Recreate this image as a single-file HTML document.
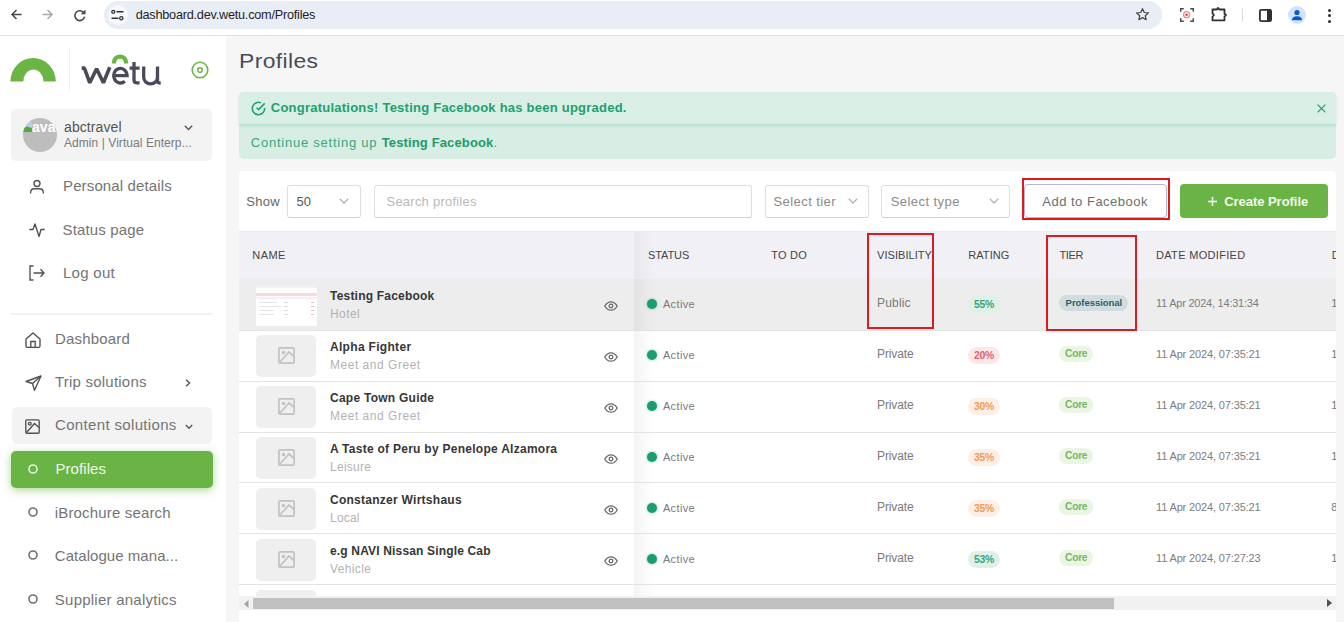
<!DOCTYPE html>
<html><head><meta charset="utf-8"><title>Profiles</title>
<style>
html,body{margin:0;padding:0;width:1344px;height:622px;overflow:hidden;background:#fff;}
body{position:relative;font-family:"Liberation Sans",sans-serif;}
.t{position:absolute;white-space:pre;}
svg{overflow:visible}
</style></head><body>
<div style="position:absolute;left:0px;top:0px;width:1344px;height:35px;background:#fff"></div>
<div style="position:absolute;left:0px;top:35px;width:1344px;height:1px;background:#e3e3e3"></div>
<svg style="position:absolute;left:11px;top:9.3px;" width="11" height="11" viewBox="0 0 11 11" fill="none"><path d="M10.5 5.5H1M5.5 1L1 5.5 5.5 10" stroke="#474747" stroke-width="1.5"/></svg>
<svg style="position:absolute;left:42px;top:9.3px;" width="11" height="11" viewBox="0 0 11 11" fill="none"><path d="M0.5 5.5H10M5.5 1L10 5.5 5.5 10" stroke="#a8a8a8" stroke-width="1.5"/></svg>
<svg style="position:absolute;left:74px;top:8.5px;" width="12" height="12" viewBox="0 0 12 12" fill="none"><path d="M10.1 4.3A4.9 4.9 0 1 0 10.6 7.6" stroke="#474747" stroke-width="1.6"/><path d="M11.5 0.5V5.3H6.7Z" fill="#474747"/></svg>
<div style="position:absolute;left:104px;top:1px;width:1058px;height:28px;background:#e9edf6;border-radius:14px"></div>
<div style="position:absolute;left:108px;top:5px;width:20px;height:20px;background:#f7f8fc;border-radius:50%"></div>
<svg style="position:absolute;left:111px;top:10px;" width="13" height="10" viewBox="0 0 13 10" fill="none"><circle cx="2.3" cy="1.8" r="1.5" stroke="#303030" stroke-width="1.3"/><path d="M5.5 1.8H12.5M0.5 8.2H7.5" stroke="#303030" stroke-width="1.4"/><circle cx="10.3" cy="8.2" r="1.6" stroke="#303030" stroke-width="1.3"/></svg>
<div class="t" style="left:135.7px;top:8.85px;font-size:12.7px;line-height:12.7px;font-weight:400;color:#1f1f1f;letter-spacing:-0.231px;">dashboard.dev.wetu.com/Profiles</div>
<svg style="position:absolute;left:1135px;top:7px;" width="15" height="15" viewBox="0 0 24 24" fill="none"><path d="M12 2.8l2.8 6 6.5.7-4.9 4.4 1.4 6.4L12 17l-5.8 3.3 1.4-6.4L2.7 9.5l6.5-.7z" stroke="#474747" stroke-width="2" stroke-linejoin="round"/></svg>
<svg style="position:absolute;left:1180px;top:8px;" width="14" height="14" viewBox="0 0 14 14" fill="none"><path d="M0.7 3.8V0.7H3.8M10.2 0.7H13.3V3.8M13.3 10.2V13.3H10.2M3.8 13.3H0.7V10.2" stroke="#4a4a4a" stroke-width="1.5"/><circle cx="6.6" cy="6.7" r="3" stroke="#f28b8b" stroke-width="1.3"/><circle cx="6.6" cy="6.7" r="1.3" fill="#e53935"/></svg>
<svg style="position:absolute;left:1211px;top:7px;" width="16" height="15" viewBox="0 0 16 15" fill="none"><path d="M1.5 2.5H5.9L7.1 0.9 8.3 2.5H13.5V6.8L15 8 13.5 9.2V13.3H1.5V9.6L3 8 1.5 6.4Z" stroke="#303030" stroke-width="1.8" stroke-linejoin="round"/></svg>
<div style="position:absolute;left:1242px;top:8px;width:1px;height:13px;background:#dcdcdc"></div>
<svg style="position:absolute;left:1259px;top:8.5px;" width="13" height="13" viewBox="0 0 13 13" fill="none"><rect x="0.9" y="0.9" width="11.2" height="11.2" rx="1.3" stroke="#303030" stroke-width="1.8"/><rect x="8" y="1" width="4" height="11" fill="#303030"/></svg>
<div style="position:absolute;left:1288px;top:6px;width:18px;height:18px;background:#d3e3fd;border-radius:50%"></div>
<svg style="position:absolute;left:1291px;top:9px;" width="12" height="12" viewBox="0 0 12 12" fill="none"><circle cx="6" cy="3.5" r="2.6" fill="#0b57d0"/><path d="M1 11.2C1 8.4 3.3 7.3 6 7.3s5 1.1 5 3.9z" fill="#0b57d0"/></svg>
<div style="position:absolute;left:1327.5px;top:8.5px;width:3px;height:3px;border-radius:50%;background:#303030"></div>
<div style="position:absolute;left:1327.5px;top:14px;width:3px;height:3px;border-radius:50%;background:#303030"></div>
<div style="position:absolute;left:1327.5px;top:19.5px;width:3px;height:3px;border-radius:50%;background:#303030"></div>
<div style="position:absolute;left:0px;top:36px;width:226px;height:586px;background:#fff"></div>
<svg style="position:absolute;left:0px;top:40px;" width="70" height="50" viewBox="0 40 70 50" fill="none"><path d="M10.4 81.6A22.7 23.6 0 0 1 55.8 81.6H43.5A10.1 12 0 0 0 23.3 81.6Z" fill="#6bb545"/></svg>
<div style="position:absolute;left:69px;top:48px;width:1px;height:43px;background:#f0f0f0"></div>
<svg style="position:absolute;left:70px;top:50px;" width="100" height="40" viewBox="70 50 100 40" fill="none"><path d="M81.7 68.1H84.4L89.8 82.8 96.6 68.8 103.4 82.8 109.8 67.2" stroke="#4b4a5a" stroke-width="3.6" stroke-linejoin="bevel"/><path d="M114 75.6H127.1A6.7 7.3 0 1 0 124.8 81.2" stroke="#4b4a5a" stroke-width="3.3"/><path d="M134 62V80Q134 82.9 137.2 82.9H139.6M129.6 68.1H139.6" stroke="#4b4a5a" stroke-width="3.3"/><path d="M143.7 66.4V77.3A6.9 6.6 0 0 0 157.5 77.3V66.4M157.5 75V81.5Q157.5 83 160.7 83" stroke="#4b4a5a" stroke-width="3.3"/><path d="M111.8 63.4V62.6A8.2 8.2 0 0 1 128.2 62.6V63.4H123.9V62.6A3.9 3.9 0 0 0 116.1 62.6V63.4Z" fill="#6bb545"/></svg>
<svg style="position:absolute;left:191px;top:61px;" width="18" height="18" viewBox="0 0 18 18" fill="none"><circle cx="9" cy="9" r="7.8" stroke="#6ab445" stroke-width="1.6"/><circle cx="9" cy="9" r="2.3" stroke="#6ab445" stroke-width="1.5"/></svg>
<div style="position:absolute;left:11px;top:109px;width:201px;height:52px;background:#f3f3f3;border-radius:5px"></div>
<div style="position:absolute;left:22.7px;top:118px;width:34px;height:34px;border-radius:50%;background:#bdbdbd;overflow:hidden"><svg style="position:absolute;left:0.7px;top:4px" width="9" height="10" viewBox="0 0 9 10"><rect x="0" y="0" width="9" height="6" fill="#b9d3e3"/><path d="M0 10V6.5L4 4.5 9 6V10Z" fill="#58a83a"/></svg><div style="position:absolute;left:9.2px;top:1.9px;font-size:14px;line-height:14px;font-weight:700;color:#fff;letter-spacing:0.2px;white-space:pre">ava</div></div>
<div class="t" style="left:64px;top:119.85px;font-size:14px;line-height:14px;font-weight:400;color:#555;letter-spacing:0.099px;">abctravel</div>
<div class="t" style="left:64px;top:136.84px;font-size:12px;line-height:12px;font-weight:400;color:#7a7a7a;letter-spacing:0.060px;">Admin | Virtual Enterp...</div>
<svg style="position:absolute;left:184px;top:125px;" width="9" height="6" viewBox="0 0 9 6" fill="none"><path d="M0.8 0.8L4.5 4.6 8.2 0.8" stroke="#555" stroke-width="1.4"/></svg>
<svg style="position:absolute;left:29px;top:179px;" width="16" height="16" viewBox="0 0 16 16" fill="none"><circle cx="8" cy="4.5" r="3" stroke="#505050" stroke-width="1.35"/><path d="M1.6 14.5V13.5A4 4 0 0 1 5.6 9.7H10.4A4 4 0 0 1 14.4 13.5V14.5" stroke="#505050" stroke-width="1.35"/></svg>
<div class="t" style="left:63px;top:178.20px;font-size:15px;line-height:15px;font-weight:400;color:#747474;letter-spacing:0.135px;">Personal details</div>
<svg style="position:absolute;left:29px;top:222px;" width="16" height="16" viewBox="0 0 16 16" fill="none"><path d="M0.3 7.5H4L6 2 10 14.5 12 7.5H15.7" stroke="#505050" stroke-width="1.35" stroke-linejoin="round"/></svg>
<div class="t" style="left:62.5px;top:221.50px;font-size:15px;line-height:15px;font-weight:400;color:#747474;letter-spacing:0.158px;">Status page</div>
<svg style="position:absolute;left:29px;top:265px;" width="16" height="16" viewBox="0 0 16 16" fill="none"><path d="M4.5 1H1V15H4.5" stroke="#505050" stroke-width="1.35"/><path d="M4.5 8H15M11.5 4.3L15 8 11.5 11.7" stroke="#505050" stroke-width="1.35"/></svg>
<div class="t" style="left:63px;top:264.90px;font-size:15px;line-height:15px;font-weight:400;color:#747474;letter-spacing:0.279px;">Log out</div>
<div style="position:absolute;left:11px;top:313px;width:201px;height:2px;background:#f2f2f2"></div>
<svg style="position:absolute;left:25px;top:332px;" width="16" height="16" viewBox="0 0 16 16" fill="none"><path d="M1 7L8 1 15 7V14A1.3 1.3 0 0 1 13.7 15.3H2.3A1.3 1.3 0 0 1 1 14Z" stroke="#505050" stroke-width="1.35" stroke-linejoin="round"/><path d="M5.8 15.3V9.5H10.2V15.3" stroke="#505050" stroke-width="1.35"/></svg>
<div class="t" style="left:55px;top:330.80px;font-size:15px;line-height:15px;font-weight:400;color:#747474;letter-spacing:0.179px;">Dashboard</div>
<svg style="position:absolute;left:24.5px;top:375px;" width="17" height="16" viewBox="0 0 17 16" fill="none"><path d="M16 1L1 6.5 7.5 8.5 9.5 15.2Z" stroke="#505050" stroke-width="1.35" stroke-linejoin="round"/><path d="M16 1L7.5 8.5" stroke="#505050" stroke-width="1.35"/></svg>
<div class="t" style="left:55px;top:374.40px;font-size:15px;line-height:15px;font-weight:400;color:#747474;letter-spacing:0.217px;">Trip solutions</div>
<svg style="position:absolute;left:185px;top:379px;" width="6" height="8" viewBox="0 0 6 8" fill="none"><path d="M1 0.8L4.6 4 1 7.2" stroke="#555" stroke-width="1.4"/></svg>
<div style="position:absolute;left:12px;top:407px;width:200px;height:37px;background:#f3f3f3;border-radius:5px"></div>
<svg style="position:absolute;left:25px;top:419px;" width="15" height="15" viewBox="0 0 15 15" fill="none"><rect x="0.8" y="0.8" width="13.4" height="13.4" rx="1" stroke="#505050" stroke-width="1.35"/><circle cx="4.8" cy="4.8" r="1.4" stroke="#505050" stroke-width="1.3"/><path d="M14 8.5L9.5 4.5 1.5 13.5" stroke="#505050" stroke-width="1.35"/></svg>
<div class="t" style="left:55px;top:417.20px;font-size:15px;line-height:15px;font-weight:400;color:#747474;letter-spacing:0.341px;">Content solutions</div>
<svg style="position:absolute;left:185px;top:424px;" width="8" height="6" viewBox="0 0 8 6" fill="none"><path d="M0.8 1L4 4.3 7.2 1" stroke="#555" stroke-width="1.4"/></svg>
<div style="position:absolute;left:10.5px;top:451px;width:202.0px;height:36.5px;background:#69b444;border-radius:5px;box-shadow:0 2px 8px rgba(105,180,68,0.55)"></div>
<svg style="position:absolute;left:28px;top:464px;" width="10" height="10" viewBox="0 0 10 10" fill="none"><circle cx="5" cy="5" r="4" stroke="#e6f4de" stroke-width="1.6"/></svg>
<div class="t" style="left:55.5px;top:460.70px;font-size:15px;line-height:15px;font-weight:400;color:#f0f8ea;letter-spacing:0.059px;">Profiles</div>
<svg style="position:absolute;left:28px;top:507.4px;" width="10" height="10" viewBox="0 0 10 10" fill="none"><circle cx="5" cy="5" r="4" stroke="#707070" stroke-width="1.6"/></svg>
<div class="t" style="left:54.8px;top:505.20px;font-size:15px;line-height:15px;font-weight:400;color:#747474;letter-spacing:0.157px;">iBrochure search</div>
<svg style="position:absolute;left:28px;top:550.0px;" width="10" height="10" viewBox="0 0 10 10" fill="none"><circle cx="5" cy="5" r="4" stroke="#707070" stroke-width="1.6"/></svg>
<div class="t" style="left:54.8px;top:547.80px;font-size:15px;line-height:15px;font-weight:400;color:#747474;letter-spacing:0.048px;">Catalogue mana...</div>
<svg style="position:absolute;left:28px;top:593.8px;" width="10" height="10" viewBox="0 0 10 10" fill="none"><circle cx="5" cy="5" r="4" stroke="#707070" stroke-width="1.6"/></svg>
<div class="t" style="left:54.8px;top:591.60px;font-size:15px;line-height:15px;font-weight:400;color:#747474;letter-spacing:0.241px;">Supplier analytics</div>
<div style="position:absolute;left:226px;top:36px;width:1118px;height:586px;background:#f6f6f7"></div>
<div class="t" style="left:239.3px;top:50.22px;font-size:21px;line-height:21px;font-weight:400;color:#4b4b57;letter-spacing:0.35px;transform:scaleX(1.09);transform-origin:0 0;">Profiles</div>
<div style="position:absolute;left:239px;top:92px;width:1097px;height:67px;background:#d8eee5;border-radius:5px"></div>
<div style="position:absolute;left:239px;top:92px;width:1097px;height:32px;background:#d9efe6;border-radius:5px 5px 0 0;box-shadow:0 2px 3px rgba(120,190,160,0.35)"></div>
<svg style="position:absolute;left:250.5px;top:100.5px;" width="15" height="15" viewBox="0 0 16 16" fill="none"><path d="M14.6 7.4V8A6.6 6.6 0 1 1 10.7 2" stroke="#22a06f" stroke-width="1.7"/><path d="M14.6 2.6L8 9.2 6 7.2" stroke="#22a06f" stroke-width="1.7"/></svg>
<div class="t" style="left:270.8px;top:101.29px;font-size:13px;line-height:13px;font-weight:700;color:#22a06f;letter-spacing:0.237px;">Congratulations! Testing Facebook has been upgraded.</div>
<svg style="position:absolute;left:1317px;top:104px;" width="9" height="9" viewBox="0 0 9 9" fill="none"><path d="M0.6 0.6L8.4 8.4M8.4 0.6L0.6 8.4" stroke="#22a06f" stroke-width="1.25"/></svg>
<div class="t" style="left:250.8px;top:136px;font-size:13px;line-height:13px;color:#3aa57e;letter-spacing:0.76px">Continue setting up <b style="color:#1f9a6a;letter-spacing:0.14px">Testing Facebook</b>.</div>
<div style="position:absolute;left:238.5px;top:171px;width:1097.5px;height:451px;background:#fff;border-radius:4px 4px 0 0"></div>
<div class="t" style="left:246.2px;top:194.99px;font-size:13px;line-height:13px;font-weight:400;color:#666;letter-spacing:0.317px;">Show</div>
<div style="position:absolute;left:287px;top:184.5px;width:74px;height:33.0px;border:1px solid #dedede;border-bottom-color:#d2d2d2;border-radius:3px;box-sizing:border-box"></div>
<div class="t" style="left:296.5px;top:194.99px;font-size:13px;line-height:13px;font-weight:400;color:#555;">50</div>
<svg style="position:absolute;left:339.3px;top:198.4px;" width="10" height="6" viewBox="0 0 10 6" fill="none"><path d="M0.8 0.8L5 5 9.2 0.8" stroke="#b3b3b3" stroke-width="1.3"/></svg>
<div style="position:absolute;left:373.5px;top:184.5px;width:378.0px;height:33.0px;border:1px solid #dedede;border-bottom-color:#d2d2d2;border-radius:3px;box-sizing:border-box"></div>
<div class="t" style="left:386.5px;top:194.99px;font-size:13px;line-height:13px;font-weight:400;color:#b9b9b9;letter-spacing:0.232px;">Search profiles</div>
<div style="position:absolute;left:764.5px;top:184.5px;width:104.5px;height:33.0px;border:1px solid #dedede;border-bottom-color:#d2d2d2;border-radius:3px;box-sizing:border-box"></div>
<div class="t" style="left:773.5px;top:194.99px;font-size:13px;line-height:13px;font-weight:400;color:#8a8a8a;letter-spacing:0.426px;">Select tier</div>
<svg style="position:absolute;left:848px;top:198.4px;" width="10" height="6" viewBox="0 0 10 6" fill="none"><path d="M0.8 0.8L5 5 9.2 0.8" stroke="#b3b3b3" stroke-width="1.3"/></svg>
<div style="position:absolute;left:881.3px;top:184.5px;width:129.20000000000005px;height:33.0px;border:1px solid #dedede;border-bottom-color:#d2d2d2;border-radius:3px;box-sizing:border-box"></div>
<div class="t" style="left:890.7px;top:194.99px;font-size:13px;line-height:13px;font-weight:400;color:#8a8a8a;letter-spacing:0.443px;">Select type</div>
<svg style="position:absolute;left:989px;top:198.4px;" width="10" height="6" viewBox="0 0 10 6" fill="none"><path d="M0.8 0.8L5 5 9.2 0.8" stroke="#b3b3b3" stroke-width="1.3"/></svg>
<div style="position:absolute;left:1023.7px;top:183.7px;width:143.29999999999995px;height:34.0px;border:1px solid #b9b6c6;border-radius:4px;box-sizing:border-box;background:#fff"></div>
<div class="t" style="left:1042.3px;top:194.99px;font-size:13px;line-height:13px;font-weight:400;color:#6e6e6e;letter-spacing:0.494px;">Add to Facebook</div>
<div style="position:absolute;left:1021.5px;top:177.8px;width:148.79999999999995px;height:42.0px;border:2px solid #dc1a20;box-sizing:border-box"></div>
<div style="position:absolute;left:1180.2px;top:184.2px;width:147.79999999999995px;height:33.5px;background:#69b444;border-radius:4px"></div>
<svg style="position:absolute;left:1208px;top:196.5px;" width="9" height="9" viewBox="0 0 9 9" fill="none"><path d="M4.5 0V9M0 4.5H9" stroke="#fff" stroke-width="1.5"/></svg>
<div class="t" style="left:1224.2px;top:194.99px;font-size:13px;line-height:13px;font-weight:700;color:#f1f9ec;letter-spacing:-0.039px;">Create Profile</div>
<div style="position:absolute;left:238.5px;top:231px;width:1097.5px;height:48px;background:#f1f1f5"></div>
<div style="position:absolute;left:238.5px;top:231px;width:1097.5px;height:1px;background:#ebebef"></div>
<div style="position:absolute;left:634px;top:232px;width:20px;height:47px;background:linear-gradient(90deg,rgba(0,0,0,0.035),rgba(0,0,0,0))"></div>
<div class="t" style="left:252.3px;top:249.99px;font-size:11px;line-height:11px;font-weight:400;color:#444;letter-spacing:0.430px;">NAME</div>
<div class="t" style="left:647.9px;top:249.99px;font-size:11px;line-height:11px;font-weight:400;color:#444;letter-spacing:-0.078px;">STATUS</div>
<div class="t" style="left:771.2px;top:249.99px;font-size:11px;line-height:11px;font-weight:400;color:#444;letter-spacing:0.232px;">TO DO</div>
<div class="t" style="left:877px;top:249.99px;font-size:11px;line-height:11px;font-weight:400;color:#444;letter-spacing:0.058px;">VISIBILITY</div>
<div class="t" style="left:968.2px;top:249.99px;font-size:11px;line-height:11px;font-weight:400;color:#444;letter-spacing:0.092px;">RATING</div>
<div class="t" style="left:1059.5px;top:249.99px;font-size:11px;line-height:11px;font-weight:400;color:#444;letter-spacing:-0.391px;">TIER</div>
<div class="t" style="left:1156px;top:249.99px;font-size:11px;line-height:11px;font-weight:400;color:#444;letter-spacing:0.319px;">DATE MODIFIED</div>
<div class="t" style="left:1331.8px;top:249.99px;font-size:11px;line-height:11px;font-weight:400;color:#444;">D</div>
<div style="position:absolute;left:238.5px;top:279px;width:1097.5px;height:51px;background:#ededed"></div>
<div style="position:absolute;left:238.5px;top:330px;width:1097.5px;height:1px;background:#e3e3e3"></div>
<div style="position:absolute;left:255.5px;top:284.5px;width:61px;height:41px;background:#fff;overflow:hidden"><div style="position:absolute;left:0;top:0;width:61px;height:3px;background:#f1f1f4"></div><div style="position:absolute;left:0;top:8px;width:61px;height:3px;background:#fbd9d9"></div><div style="position:absolute;left:0;top:12px;width:61px;height:2px;background:#f3eefa"></div><div style="position:absolute;left:3px;top:17px;width:18px;height:1px;background:#e4e4e4"></div><div style="position:absolute;left:3px;top:21px;width:22px;height:1px;background:#e4e4e4"></div><div style="position:absolute;left:3px;top:25px;width:15px;height:1px;background:#e4e4e4"></div><div style="position:absolute;left:3px;top:29px;width:15px;height:1px;background:#e4e4e4"></div><div style="position:absolute;left:28px;top:17px;width:4px;height:13px;background:repeating-linear-gradient(#ddd 0 1px,transparent 1px 4px)"></div><div style="position:absolute;left:55px;top:17px;width:3px;height:13px;background:repeating-linear-gradient(#ebc 0 1px,transparent 1px 4px)"></div></div>
<div class="t" style="left:330px;top:289.74px;font-size:12px;line-height:12px;font-weight:700;color:#363636;letter-spacing:0.204px;">Testing Facebook</div>
<div class="t" style="left:330px;top:307.94px;font-size:12px;line-height:12px;font-weight:400;color:#b3b3b3;letter-spacing:0.437px;">Hotel</div>
<svg style="position:absolute;left:603.5px;top:300.5px;" width="14" height="10" viewBox="0 0 14 10" fill="none"><path d="M0.8 5C2.5 2 4.5 0.8 7 0.8S11.5 2 13.2 5C11.5 8 9.5 9.2 7 9.2S2.5 8 0.8 5Z" stroke="#6a6a6a" stroke-width="1.3"/><circle cx="7" cy="5" r="1.8" stroke="#6a6a6a" stroke-width="1.3"/></svg>
<div style="position:absolute;left:634px;top:279px;width:20px;height:51px;background:linear-gradient(90deg,rgba(0,0,0,0.045),rgba(0,0,0,0))"></div>
<div style="position:absolute;left:646.5px;top:299px;width:10px;height:10px;border-radius:50%;background:#1a9e6e;box-shadow:0 0 2px 1px rgba(26,158,110,0.25)"></div>
<div class="t" style="left:662.9px;top:299.44px;font-size:11px;line-height:11px;font-weight:400;color:#7a7a7a;letter-spacing:0.372px;">Active</div>
<div class="t" style="left:877px;top:297.44px;font-size:12px;line-height:12px;font-weight:400;color:#7b7b7b;letter-spacing:0.185px;">Public</div>
<div style="position:absolute;left:968.2px;top:296.2px;width:32px;height:16.5px;border-radius:9px;background:#def1e8"></div>
<div class="t" style="left:974px;top:299.59px;font-size:10.4px;line-height:10.4px;font-weight:700;color:#3aa27b;letter-spacing:-0.266px;">55%</div>
<div style="position:absolute;left:1059.1px;top:294.8px;width:69.3px;height:16.3px;border-radius:9px;background:#cfdde1"></div>
<div class="t" style="left:1065.6px;top:298.16px;font-size:9.5px;line-height:9.5px;font-weight:700;color:#2f5d63;letter-spacing:-0.036px;">Professional</div>
<div class="t" style="left:1156px;top:297.59px;font-size:11px;line-height:11px;font-weight:400;color:#7d7d7d;letter-spacing:-0.231px;">11 Apr 2024, 14:31:34</div>
<div class="t" style="left:1331.3px;top:297.59px;font-size:11px;line-height:11px;font-weight:400;color:#777;">1</div>
<div style="position:absolute;left:238.5px;top:331px;width:1097.5px;height:50px;background:#fff"></div>
<div style="position:absolute;left:238.5px;top:381px;width:1097.5px;height:1px;background:#e3e3e3"></div>
<div style="position:absolute;left:255.6px;top:335px;width:60.70000000000002px;height:41.60000000000002px;background:#efefef;border-radius:5px"></div>
<svg style="position:absolute;left:277.5px;top:346.5px;" width="17" height="17" viewBox="0 0 17 17" fill="none"><rect x="0.9" y="0.9" width="15.2" height="15.2" rx="1.2" stroke="#c2c2c2" stroke-width="1.7"/><circle cx="5.5" cy="5.5" r="1.7" fill="#c2c2c2"/><path d="M16 9.5L11 5 1.5 15.5" stroke="#c2c2c2" stroke-width="1.7"/></svg>
<div class="t" style="left:330px;top:340.74px;font-size:12px;line-height:12px;font-weight:700;color:#363636;letter-spacing:0.312px;">Alpha Fighter</div>
<div class="t" style="left:330px;top:358.94px;font-size:12px;line-height:12px;font-weight:400;color:#b3b3b3;letter-spacing:0.522px;">Meet and Greet</div>
<svg style="position:absolute;left:603.5px;top:351.5px;" width="14" height="10" viewBox="0 0 14 10" fill="none"><path d="M0.8 5C2.5 2 4.5 0.8 7 0.8S11.5 2 13.2 5C11.5 8 9.5 9.2 7 9.2S2.5 8 0.8 5Z" stroke="#6a6a6a" stroke-width="1.3"/><circle cx="7" cy="5" r="1.8" stroke="#6a6a6a" stroke-width="1.3"/></svg>
<div style="position:absolute;left:634px;top:331px;width:20px;height:50px;background:linear-gradient(90deg,rgba(0,0,0,0.045),rgba(0,0,0,0))"></div>
<div style="position:absolute;left:646.5px;top:350px;width:10px;height:10px;border-radius:50%;background:#1a9e6e;box-shadow:0 0 2px 1px rgba(26,158,110,0.25)"></div>
<div class="t" style="left:662.9px;top:350.44px;font-size:11px;line-height:11px;font-weight:400;color:#7a7a7a;letter-spacing:0.372px;">Active</div>
<div class="t" style="left:877px;top:348.44px;font-size:12px;line-height:12px;font-weight:400;color:#7b7b7b;letter-spacing:-0.108px;">Private</div>
<div style="position:absolute;left:968.2px;top:347.2px;width:32px;height:16.5px;border-radius:9px;background:#fde8e8"></div>
<div class="t" style="left:974px;top:350.59px;font-size:10.4px;line-height:10.4px;font-weight:700;color:#dd646b;letter-spacing:-0.266px;">20%</div>
<div style="position:absolute;left:1059.3px;top:346.2px;width:33.5px;height:15.8px;border-radius:9px;background:#eaf5e4"></div>
<div class="t" style="left:1065px;top:348.58px;font-size:10.3px;line-height:10.3px;font-weight:700;color:#7ab564;letter-spacing:-0.292px;">Core</div>
<div class="t" style="left:1156px;top:348.59px;font-size:11px;line-height:11px;font-weight:400;color:#7d7d7d;letter-spacing:-0.141px;">11 Apr 2024, 07:35:21</div>
<div class="t" style="left:1331.3px;top:348.59px;font-size:11px;line-height:11px;font-weight:400;color:#777;">1</div>
<div style="position:absolute;left:238.5px;top:382px;width:1097.5px;height:50px;background:#fff"></div>
<div style="position:absolute;left:238.5px;top:432px;width:1097.5px;height:1px;background:#e3e3e3"></div>
<div style="position:absolute;left:255.6px;top:386px;width:60.70000000000002px;height:41.60000000000002px;background:#efefef;border-radius:5px"></div>
<svg style="position:absolute;left:277.5px;top:397.5px;" width="17" height="17" viewBox="0 0 17 17" fill="none"><rect x="0.9" y="0.9" width="15.2" height="15.2" rx="1.2" stroke="#c2c2c2" stroke-width="1.7"/><circle cx="5.5" cy="5.5" r="1.7" fill="#c2c2c2"/><path d="M16 9.5L11 5 1.5 15.5" stroke="#c2c2c2" stroke-width="1.7"/></svg>
<div class="t" style="left:330px;top:391.74px;font-size:12px;line-height:12px;font-weight:700;color:#363636;letter-spacing:0.256px;">Cape Town Guide</div>
<div class="t" style="left:330px;top:409.94px;font-size:12px;line-height:12px;font-weight:400;color:#b3b3b3;letter-spacing:0.522px;">Meet and Greet</div>
<svg style="position:absolute;left:603.5px;top:402.5px;" width="14" height="10" viewBox="0 0 14 10" fill="none"><path d="M0.8 5C2.5 2 4.5 0.8 7 0.8S11.5 2 13.2 5C11.5 8 9.5 9.2 7 9.2S2.5 8 0.8 5Z" stroke="#6a6a6a" stroke-width="1.3"/><circle cx="7" cy="5" r="1.8" stroke="#6a6a6a" stroke-width="1.3"/></svg>
<div style="position:absolute;left:634px;top:382px;width:20px;height:50px;background:linear-gradient(90deg,rgba(0,0,0,0.045),rgba(0,0,0,0))"></div>
<div style="position:absolute;left:646.5px;top:401px;width:10px;height:10px;border-radius:50%;background:#1a9e6e;box-shadow:0 0 2px 1px rgba(26,158,110,0.25)"></div>
<div class="t" style="left:662.9px;top:401.44px;font-size:11px;line-height:11px;font-weight:400;color:#7a7a7a;letter-spacing:0.372px;">Active</div>
<div class="t" style="left:877px;top:399.44px;font-size:12px;line-height:12px;font-weight:400;color:#7b7b7b;letter-spacing:-0.108px;">Private</div>
<div style="position:absolute;left:968.2px;top:398.2px;width:32px;height:16.5px;border-radius:9px;background:#fdefe6"></div>
<div class="t" style="left:974px;top:401.59px;font-size:10.4px;line-height:10.4px;font-weight:700;color:#f29a58;letter-spacing:-0.266px;">30%</div>
<div style="position:absolute;left:1059.3px;top:397.2px;width:33.5px;height:15.8px;border-radius:9px;background:#eaf5e4"></div>
<div class="t" style="left:1065px;top:399.58px;font-size:10.3px;line-height:10.3px;font-weight:700;color:#7ab564;letter-spacing:-0.292px;">Core</div>
<div class="t" style="left:1156px;top:399.59px;font-size:11px;line-height:11px;font-weight:400;color:#7d7d7d;letter-spacing:-0.141px;">11 Apr 2024, 07:35:21</div>
<div class="t" style="left:1331.3px;top:399.59px;font-size:11px;line-height:11px;font-weight:400;color:#777;">1</div>
<div style="position:absolute;left:238.5px;top:433px;width:1097.5px;height:49px;background:#fff"></div>
<div style="position:absolute;left:238.5px;top:482px;width:1097.5px;height:1px;background:#e3e3e3"></div>
<div style="position:absolute;left:255.6px;top:437px;width:60.70000000000002px;height:41.60000000000002px;background:#efefef;border-radius:5px"></div>
<svg style="position:absolute;left:277.5px;top:448.5px;" width="17" height="17" viewBox="0 0 17 17" fill="none"><rect x="0.9" y="0.9" width="15.2" height="15.2" rx="1.2" stroke="#c2c2c2" stroke-width="1.7"/><circle cx="5.5" cy="5.5" r="1.7" fill="#c2c2c2"/><path d="M16 9.5L11 5 1.5 15.5" stroke="#c2c2c2" stroke-width="1.7"/></svg>
<div class="t" style="left:330px;top:442.74px;font-size:12px;line-height:12px;font-weight:700;color:#363636;letter-spacing:0.269px;">A Taste of Peru by Penelope Alzamora</div>
<div class="t" style="left:330px;top:460.94px;font-size:12px;line-height:12px;font-weight:400;color:#b3b3b3;letter-spacing:0.277px;">Leisure</div>
<svg style="position:absolute;left:603.5px;top:453.5px;" width="14" height="10" viewBox="0 0 14 10" fill="none"><path d="M0.8 5C2.5 2 4.5 0.8 7 0.8S11.5 2 13.2 5C11.5 8 9.5 9.2 7 9.2S2.5 8 0.8 5Z" stroke="#6a6a6a" stroke-width="1.3"/><circle cx="7" cy="5" r="1.8" stroke="#6a6a6a" stroke-width="1.3"/></svg>
<div style="position:absolute;left:634px;top:433px;width:20px;height:49px;background:linear-gradient(90deg,rgba(0,0,0,0.045),rgba(0,0,0,0))"></div>
<div style="position:absolute;left:646.5px;top:452px;width:10px;height:10px;border-radius:50%;background:#1a9e6e;box-shadow:0 0 2px 1px rgba(26,158,110,0.25)"></div>
<div class="t" style="left:662.9px;top:452.44px;font-size:11px;line-height:11px;font-weight:400;color:#7a7a7a;letter-spacing:0.372px;">Active</div>
<div class="t" style="left:877px;top:450.44px;font-size:12px;line-height:12px;font-weight:400;color:#7b7b7b;letter-spacing:-0.108px;">Private</div>
<div style="position:absolute;left:968.2px;top:449.2px;width:32px;height:16.5px;border-radius:9px;background:#fdefe6"></div>
<div class="t" style="left:974px;top:452.59px;font-size:10.4px;line-height:10.4px;font-weight:700;color:#f29a58;letter-spacing:-0.266px;">35%</div>
<div style="position:absolute;left:1059.3px;top:448.2px;width:33.5px;height:15.8px;border-radius:9px;background:#eaf5e4"></div>
<div class="t" style="left:1065px;top:450.58px;font-size:10.3px;line-height:10.3px;font-weight:700;color:#7ab564;letter-spacing:-0.292px;">Core</div>
<div class="t" style="left:1156px;top:450.59px;font-size:11px;line-height:11px;font-weight:400;color:#7d7d7d;letter-spacing:-0.141px;">11 Apr 2024, 07:35:21</div>
<div class="t" style="left:1331.3px;top:450.59px;font-size:11px;line-height:11px;font-weight:400;color:#777;">1</div>
<div style="position:absolute;left:238.5px;top:483px;width:1097.5px;height:50px;background:#fff"></div>
<div style="position:absolute;left:238.5px;top:533px;width:1097.5px;height:1px;background:#e3e3e3"></div>
<div style="position:absolute;left:255.6px;top:488px;width:60.70000000000002px;height:41.60000000000002px;background:#efefef;border-radius:5px"></div>
<svg style="position:absolute;left:277.5px;top:499.5px;" width="17" height="17" viewBox="0 0 17 17" fill="none"><rect x="0.9" y="0.9" width="15.2" height="15.2" rx="1.2" stroke="#c2c2c2" stroke-width="1.7"/><circle cx="5.5" cy="5.5" r="1.7" fill="#c2c2c2"/><path d="M16 9.5L11 5 1.5 15.5" stroke="#c2c2c2" stroke-width="1.7"/></svg>
<div class="t" style="left:330px;top:493.74px;font-size:12px;line-height:12px;font-weight:700;color:#363636;letter-spacing:0.265px;">Constanzer Wirtshaus</div>
<div class="t" style="left:330px;top:511.94px;font-size:12px;line-height:12px;font-weight:400;color:#b3b3b3;letter-spacing:0.202px;">Local</div>
<svg style="position:absolute;left:603.5px;top:504.5px;" width="14" height="10" viewBox="0 0 14 10" fill="none"><path d="M0.8 5C2.5 2 4.5 0.8 7 0.8S11.5 2 13.2 5C11.5 8 9.5 9.2 7 9.2S2.5 8 0.8 5Z" stroke="#6a6a6a" stroke-width="1.3"/><circle cx="7" cy="5" r="1.8" stroke="#6a6a6a" stroke-width="1.3"/></svg>
<div style="position:absolute;left:634px;top:483px;width:20px;height:50px;background:linear-gradient(90deg,rgba(0,0,0,0.045),rgba(0,0,0,0))"></div>
<div style="position:absolute;left:646.5px;top:503px;width:10px;height:10px;border-radius:50%;background:#1a9e6e;box-shadow:0 0 2px 1px rgba(26,158,110,0.25)"></div>
<div class="t" style="left:662.9px;top:503.44px;font-size:11px;line-height:11px;font-weight:400;color:#7a7a7a;letter-spacing:0.372px;">Active</div>
<div class="t" style="left:877px;top:501.44px;font-size:12px;line-height:12px;font-weight:400;color:#7b7b7b;letter-spacing:-0.108px;">Private</div>
<div style="position:absolute;left:968.2px;top:500.2px;width:32px;height:16.5px;border-radius:9px;background:#fdefe6"></div>
<div class="t" style="left:974px;top:503.59px;font-size:10.4px;line-height:10.4px;font-weight:700;color:#f29a58;letter-spacing:-0.266px;">35%</div>
<div style="position:absolute;left:1059.3px;top:499.2px;width:33.5px;height:15.8px;border-radius:9px;background:#eaf5e4"></div>
<div class="t" style="left:1065px;top:501.58px;font-size:10.3px;line-height:10.3px;font-weight:700;color:#7ab564;letter-spacing:-0.292px;">Core</div>
<div class="t" style="left:1156px;top:501.59px;font-size:11px;line-height:11px;font-weight:400;color:#7d7d7d;letter-spacing:-0.141px;">11 Apr 2024, 07:35:21</div>
<div class="t" style="left:1331.3px;top:501.59px;font-size:11px;line-height:11px;font-weight:400;color:#777;">8</div>
<div style="position:absolute;left:238.5px;top:534px;width:1097.5px;height:50px;background:#fff"></div>
<div style="position:absolute;left:238.5px;top:584px;width:1097.5px;height:1px;background:#e3e3e3"></div>
<div style="position:absolute;left:255.6px;top:539px;width:60.70000000000002px;height:41.60000000000002px;background:#efefef;border-radius:5px"></div>
<svg style="position:absolute;left:277.5px;top:550.5px;" width="17" height="17" viewBox="0 0 17 17" fill="none"><rect x="0.9" y="0.9" width="15.2" height="15.2" rx="1.2" stroke="#c2c2c2" stroke-width="1.7"/><circle cx="5.5" cy="5.5" r="1.7" fill="#c2c2c2"/><path d="M16 9.5L11 5 1.5 15.5" stroke="#c2c2c2" stroke-width="1.7"/></svg>
<div class="t" style="left:330px;top:544.74px;font-size:12px;line-height:12px;font-weight:700;color:#363636;letter-spacing:0.162px;">e.g NAVI Nissan Single Cab</div>
<div class="t" style="left:330px;top:562.94px;font-size:12px;line-height:12px;font-weight:400;color:#b3b3b3;letter-spacing:0.357px;">Vehicle</div>
<svg style="position:absolute;left:603.5px;top:555.5px;" width="14" height="10" viewBox="0 0 14 10" fill="none"><path d="M0.8 5C2.5 2 4.5 0.8 7 0.8S11.5 2 13.2 5C11.5 8 9.5 9.2 7 9.2S2.5 8 0.8 5Z" stroke="#6a6a6a" stroke-width="1.3"/><circle cx="7" cy="5" r="1.8" stroke="#6a6a6a" stroke-width="1.3"/></svg>
<div style="position:absolute;left:634px;top:534px;width:20px;height:50px;background:linear-gradient(90deg,rgba(0,0,0,0.045),rgba(0,0,0,0))"></div>
<div style="position:absolute;left:646.5px;top:554px;width:10px;height:10px;border-radius:50%;background:#1a9e6e;box-shadow:0 0 2px 1px rgba(26,158,110,0.25)"></div>
<div class="t" style="left:662.9px;top:554.44px;font-size:11px;line-height:11px;font-weight:400;color:#7a7a7a;letter-spacing:0.372px;">Active</div>
<div class="t" style="left:877px;top:552.44px;font-size:12px;line-height:12px;font-weight:400;color:#7b7b7b;letter-spacing:-0.108px;">Private</div>
<div style="position:absolute;left:968.2px;top:551.2px;width:32px;height:16.5px;border-radius:9px;background:#def1e8"></div>
<div class="t" style="left:974px;top:554.59px;font-size:10.4px;line-height:10.4px;font-weight:700;color:#3aa27b;letter-spacing:-0.266px;">53%</div>
<div style="position:absolute;left:1059.3px;top:550.2px;width:33.5px;height:15.8px;border-radius:9px;background:#eaf5e4"></div>
<div class="t" style="left:1065px;top:552.58px;font-size:10.3px;line-height:10.3px;font-weight:700;color:#7ab564;letter-spacing:-0.292px;">Core</div>
<div class="t" style="left:1156px;top:552.59px;font-size:11px;line-height:11px;font-weight:400;color:#7d7d7d;letter-spacing:-0.141px;">11 Apr 2024, 07:27:23</div>
<div class="t" style="left:1331.3px;top:552.59px;font-size:11px;line-height:11px;font-weight:400;color:#777;">1</div>
<div style="position:absolute;left:238.5px;top:585px;width:1097.5px;height:11px;background:#fff"></div>
<div style="position:absolute;left:255.6px;top:590px;width:60.70000000000002px;height:6px;background:#efefef;border-radius:5px 5px 0 0"></div>
<div style="position:absolute;left:634px;top:585px;width:20px;height:11px;background:linear-gradient(90deg,rgba(0,0,0,0.045),rgba(0,0,0,0))"></div>
<div style="position:absolute;left:238.5px;top:596px;width:1097.5px;height:14px;background:#f1f1f1"></div>
<svg style="position:absolute;left:243.5px;top:599.5px;" width="5" height="8" viewBox="0 0 5 8" fill="none"><path d="M4.5 0L0 4 4.5 8Z" fill="#a3a3a3"/></svg>
<div style="position:absolute;left:253px;top:597.5px;width:861.4000000000001px;height:11.5px;background:#c1c1c1"></div>
<svg style="position:absolute;left:1327px;top:599px;" width="6" height="8" viewBox="0 0 6 8" fill="none"><path d="M0 0L5 4 0 8Z" fill="#505050"/></svg>
<div style="position:absolute;left:238.5px;top:610px;width:1097.5px;height:12px;background:#fff"></div>
<div style="position:absolute;left:867.3px;top:233.3px;width:66.40000000000009px;height:95.69999999999999px;border:2px solid #dc1a20;box-sizing:border-box"></div>
<div style="position:absolute;left:1046.2px;top:234.7px;width:90.5px;height:96.40000000000003px;border:2px solid #dc1a20;box-sizing:border-box"></div>
<div style="position:absolute;left:1336px;top:171px;width:8px;height:451px;background:#f6f6f7"></div>
</body></html>
